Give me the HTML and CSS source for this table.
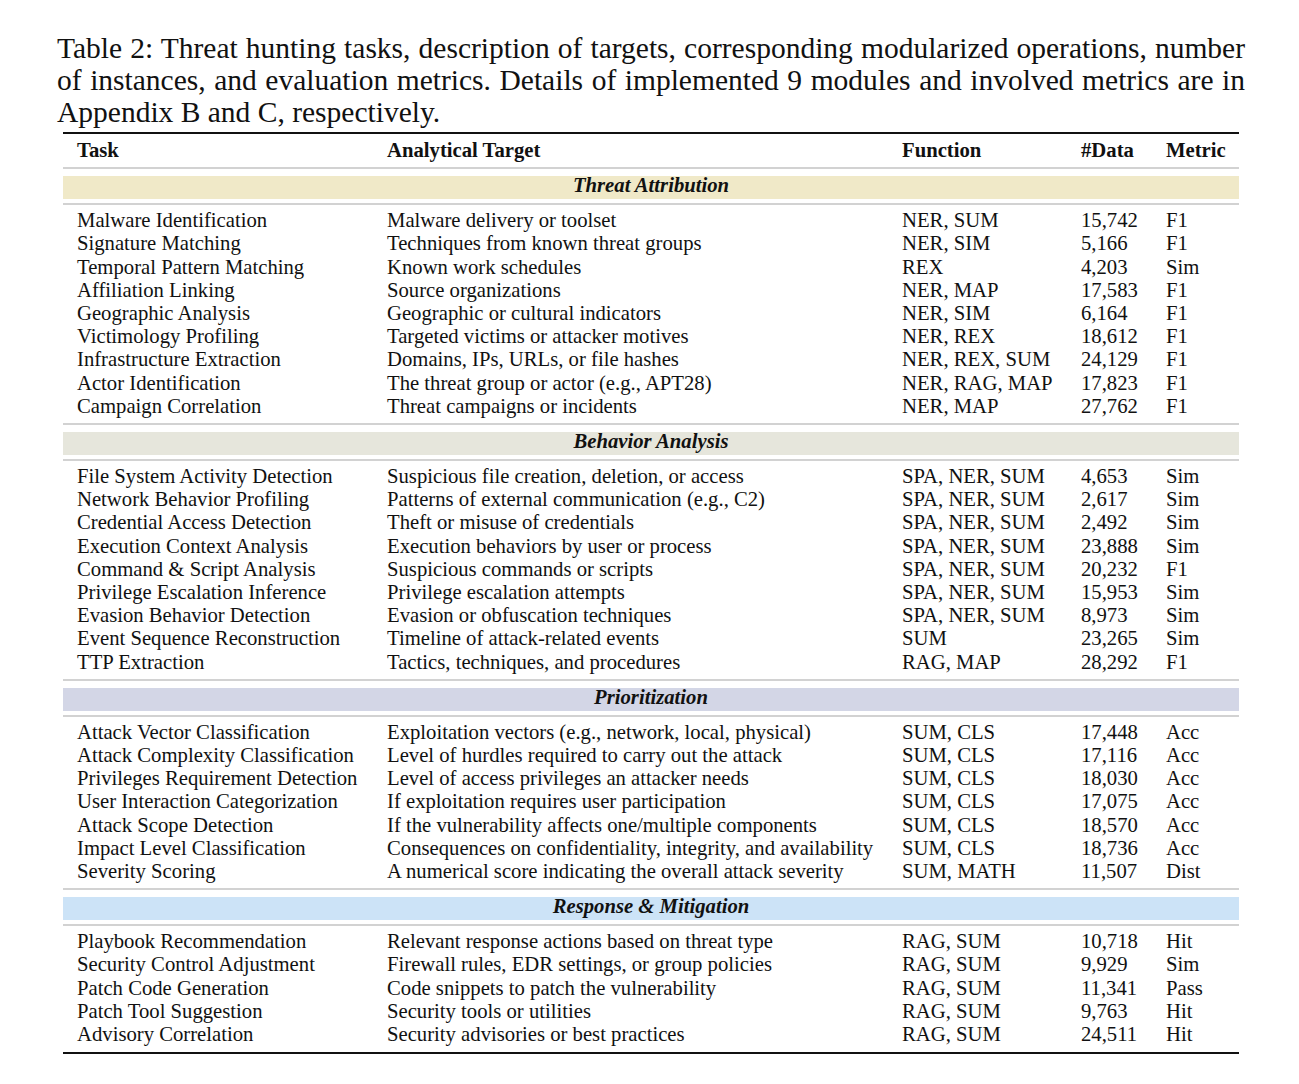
FILE: index.html
```html
<!DOCTYPE html>
<html>
<head>
<meta charset="utf-8">
<link rel="stylesheet" href="styles.css">
</head>
<body>
<div class="page">
  <div class="caption">
    <span class="cl">Table 2: Threat hunting tasks, description of targets, corresponding modularized operations, number</span>
    <span class="cl">of instances, and evaluation metrics. Details of implemented 9 modules and involved metrics are in</span>
    <span class="cl last">Appendix B and C, respectively.</span>
  </div>
  <div class="tbl">
    <div class="row head">
      <span>Task</span><span>Analytical Target</span><span>Function</span><span>#Data</span><span>Metric</span>
    </div>
    <div class="sep"></div>
    <div class="band b1">Threat Attribution</div>
    <div class="sep2"></div>
    <div class="rows">
      <div class="row"><span>Malware Identification</span><span>Malware delivery or toolset</span><span>NER, SUM</span><span>15,742</span><span>F1</span></div>
      <div class="row"><span>Signature Matching</span><span>Techniques from known threat groups</span><span>NER, SIM</span><span>5,166</span><span>F1</span></div>
      <div class="row"><span>Temporal Pattern Matching</span><span>Known work schedules</span><span>REX</span><span>4,203</span><span>Sim</span></div>
      <div class="row"><span>Affiliation Linking</span><span>Source organizations</span><span>NER, MAP</span><span>17,583</span><span>F1</span></div>
      <div class="row"><span>Geographic Analysis</span><span>Geographic or cultural indicators</span><span>NER, SIM</span><span>6,164</span><span>F1</span></div>
      <div class="row"><span>Victimology Profiling</span><span>Targeted victims or attacker motives</span><span>NER, REX</span><span>18,612</span><span>F1</span></div>
      <div class="row"><span>Infrastructure Extraction</span><span>Domains, IPs, URLs, or file hashes</span><span>NER, REX, SUM</span><span>24,129</span><span>F1</span></div>
      <div class="row"><span>Actor Identification</span><span>The threat group or actor (e.g., APT28)</span><span>NER, RAG, MAP</span><span>17,823</span><span>F1</span></div>
      <div class="row"><span>Campaign Correlation</span><span>Threat campaigns or incidents</span><span>NER, MAP</span><span>27,762</span><span>F1</span></div>
    </div>
    <div class="sep"></div>
    <div class="band b2">Behavior Analysis</div>
    <div class="sep2"></div>
    <div class="rows">
      <div class="row"><span>File System Activity Detection</span><span>Suspicious file creation, deletion, or access</span><span>SPA, NER, SUM</span><span>4,653</span><span>Sim</span></div>
      <div class="row"><span>Network Behavior Profiling</span><span>Patterns of external communication (e.g., C2)</span><span>SPA, NER, SUM</span><span>2,617</span><span>Sim</span></div>
      <div class="row"><span>Credential Access Detection</span><span>Theft or misuse of credentials</span><span>SPA, NER, SUM</span><span>2,492</span><span>Sim</span></div>
      <div class="row"><span>Execution Context Analysis</span><span>Execution behaviors by user or process</span><span>SPA, NER, SUM</span><span>23,888</span><span>Sim</span></div>
      <div class="row"><span>Command &amp; Script Analysis</span><span>Suspicious commands or scripts</span><span>SPA, NER, SUM</span><span>20,232</span><span>F1</span></div>
      <div class="row"><span>Privilege Escalation Inference</span><span>Privilege escalation attempts</span><span>SPA, NER, SUM</span><span>15,953</span><span>Sim</span></div>
      <div class="row"><span>Evasion Behavior Detection</span><span>Evasion or obfuscation techniques</span><span>SPA, NER, SUM</span><span>8,973</span><span>Sim</span></div>
      <div class="row"><span>Event Sequence Reconstruction</span><span>Timeline of attack-related events</span><span>SUM</span><span>23,265</span><span>Sim</span></div>
      <div class="row"><span>TTP Extraction</span><span>Tactics, techniques, and procedures</span><span>RAG, MAP</span><span>28,292</span><span>F1</span></div>
    </div>
    <div class="sep"></div>
    <div class="band b3">Prioritization</div>
    <div class="sep2"></div>
    <div class="rows">
      <div class="row"><span>Attack Vector Classification</span><span>Exploitation vectors (e.g., network, local, physical)</span><span>SUM, CLS</span><span>17,448</span><span>Acc</span></div>
      <div class="row"><span>Attack Complexity Classification</span><span>Level of hurdles required to carry out the attack</span><span>SUM, CLS</span><span>17,116</span><span>Acc</span></div>
      <div class="row"><span>Privileges Requirement Detection</span><span>Level of access privileges an attacker needs</span><span>SUM, CLS</span><span>18,030</span><span>Acc</span></div>
      <div class="row"><span>User Interaction Categorization</span><span>If exploitation requires user participation</span><span>SUM, CLS</span><span>17,075</span><span>Acc</span></div>
      <div class="row"><span>Attack Scope Detection</span><span>If the vulnerability affects one/multiple components</span><span>SUM, CLS</span><span>18,570</span><span>Acc</span></div>
      <div class="row"><span>Impact Level Classification</span><span>Consequences on confidentiality, integrity, and availability</span><span>SUM, CLS</span><span>18,736</span><span>Acc</span></div>
      <div class="row"><span>Severity Scoring</span><span>A numerical score indicating the overall attack severity</span><span>SUM, MATH</span><span>11,507</span><span>Dist</span></div>
    </div>
    <div class="sep"></div>
    <div class="band b4">Response &amp; Mitigation</div>
    <div class="sep2"></div>
    <div class="rows lastrows">
      <div class="row"><span>Playbook Recommendation</span><span>Relevant response actions based on threat type</span><span>RAG, SUM</span><span>10,718</span><span>Hit</span></div>
      <div class="row"><span>Security Control Adjustment</span><span>Firewall rules, EDR settings, or group policies</span><span>RAG, SUM</span><span>9,929</span><span>Sim</span></div>
      <div class="row"><span>Patch Code Generation</span><span>Code snippets to patch the vulnerability</span><span>RAG, SUM</span><span>11,341</span><span>Pass</span></div>
      <div class="row"><span>Patch Tool Suggestion</span><span>Security tools or utilities</span><span>RAG, SUM</span><span>9,763</span><span>Hit</span></div>
      <div class="row"><span>Advisory Correlation</span><span>Security advisories or best practices</span><span>RAG, SUM</span><span>24,511</span><span>Hit</span></div>
    </div>
  </div>
</div>
</body>
</html>
```
FILE: styles.css
```css
html, body {
  margin: 0;
  padding: 0;
  background: #ffffff;
}
body {
  font-family: "Liberation Serif", "Times New Roman", serif;
  color: #111111;
}
.page {
  padding: 32px 0 0 57px;
  width: 1188px;
}
.caption {
  font-size: 29.5px;
  line-height: 32px;
}
.cl {
  display: block;
  text-align: justify;
  text-align-last: justify;
  white-space: nowrap;
}
.cl.last {
  text-align-last: left;
}
.tbl {
  margin: 4px 6px 0 6px;
  border-top: 2px solid #111;
  border-bottom: 2px solid #111;
  font-size: 20.7px;
  line-height: 23.2px;
}
.row {
  display: grid;
  grid-template-columns: 310px 515px 179px 85px 1fr;
  padding-left: 14px;
  white-space: nowrap;
}
.row.head {
  font-weight: bold;
  padding-top: 5px;
  padding-bottom: 5px;
}
.rows {
  padding-top: 4px;
  padding-bottom: 5px;
}
.rows.lastrows {
  padding-bottom: 6px;
}
.sep {
  height: 2px;
  background: #d2d2d2;
  margin-bottom: 7px;
}
.sep2 {
  height: 2px;
  background: #d2d2d2;
  margin-top: 4px;
}
.band {
  height: 23px;
  line-height: 19px;
  text-align: center;
  font-weight: bold;
  font-style: italic;
}
.b1 { background: #f0e9c8; }
.b2 { background: #e6e6dc; }
.b3 { background: #d3d6e6; }
.b4 { background: #cce3f7; }
```
